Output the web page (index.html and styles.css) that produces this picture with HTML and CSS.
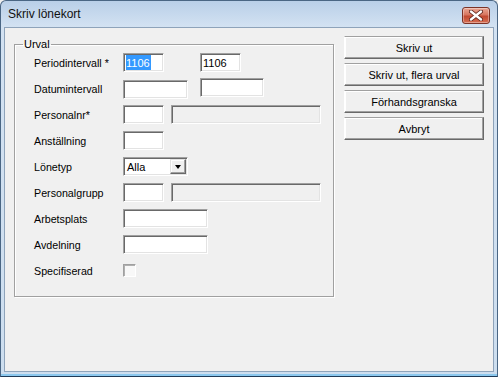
FILE: index.html
```html
<!DOCTYPE html>
<html lang="sv">

<head>
    <meta charset="UTF-8">
    <meta name="viewport" content="width=device-width, initial-scale=1.0">
    <title>Skriv lönekort</title>
    <link rel="stylesheet" href="styles.css">
</head>

<body>
    <div class="window">
        <div class="titlebar">
            <span class="title">Skriv lönekort</span>
            <button class="close" aria-label="Stäng">
                <svg width="14" height="11" viewBox="0 0 14 11">
                    <path d="M2 1.5 L12 9.5 M12 1.5 L2 9.5" stroke="#5a2018" stroke-width="4" stroke-linecap="round"/>
                    <path d="M2 1.5 L12 9.5 M12 1.5 L2 9.5" stroke="#fff" stroke-width="2.4" stroke-linecap="round"/>
                </svg>
            </button>
        </div>

        <div class="client">
            <fieldset class="urval">
                <legend>Urval</legend>
                <div class="fields">
                    <div class="row">
                        <label>Periodintervall *</label>
                        <input type="text" class="w41 selected" value="1106">
                        <input type="text" class="w41 far" value="1106">
                    </div>
                    <div class="row">
                        <label>Datumintervall</label>
                        <input type="text" class="w65 lower">
                        <input type="text" class="w64 near">
                    </div>
                    <div class="row">
                        <label>Personalnr*</label>
                        <input type="text" class="w41">
                        <input type="text" class="w150 close-gap" disabled>
                    </div>
                    <div class="row">
                        <label>Anställning</label>
                        <input type="text" class="w41">
                    </div>
                    <div class="row">
                        <label>Lönetyp</label>
                        <div class="select w65">
                            <span class="select-value">Alla</span>
                            <span class="select-arrow"></span>
                        </div>
                    </div>
                    <div class="row">
                        <label>Personalgrupp</label>
                        <input type="text" class="w41">
                        <input type="text" class="w150 close-gap" disabled>
                    </div>
                    <div class="row">
                        <label>Arbetsplats</label>
                        <input type="text" class="w85">
                    </div>
                    <div class="row">
                        <label>Avdelning</label>
                        <input type="text" class="w85">
                    </div>
                    <div class="row">
                        <label>Specifiserad</label>
                        <span class="checkbox"></span>
                    </div>
                </div>
            </fieldset>

            <div class="knappar">
                <button class="knapp">Skriv ut</button>
                <button class="knapp">Skriv ut, flera urval</button>
                <button class="knapp">Förhandsgranska</button>
                <button class="knapp">Avbryt</button>
            </div>
        </div>
    </div>
</body>

</html>
```

FILE: styles.css
```css
body {
    margin: 0;
    padding: 0;
    font-family: "Liberation Sans", Arial, sans-serif;
    font-size: 11px;
    color: #000;
    background-color: #f0f0f0;
}

.window {
    width: 498px;
    height: 377px;
    box-sizing: border-box;
    display: flex;
    flex-direction: column;
    padding: 0 3px 4px 3px;
    border: 1px solid #4a6684;
    border-bottom-color: #1f3b58;
    border-radius: 6px 6px 0 0;
    background: linear-gradient(#b9cfe8, #d3e2f2 26px, #cddeef);
    box-shadow: inset 0 -2px 0 #8cc8ee;
}

.titlebar {
    height: 26px;
    display: flex;
    align-items: center;
    justify-content: space-between;
    padding-left: 4px;
}

.title {
    font-size: 12px;
    color: #111;
}

.close {
    width: 28px;
    height: 17px;
    margin-right: 4px;
    margin-top: 2px;
    padding: 0;
    display: flex;
    align-items: center;
    justify-content: center;
    border: 1px solid #7b3327;
    border-radius: 3px;
    background: linear-gradient(#e9a795, #d8765f 45%, #c24a32 55%, #d66e52);
    box-shadow: inset 0 0 0 1px rgba(255, 255, 255, 0.35);
}

.client {
    flex: 1;
    display: flex;
    align-items: flex-start;
    padding: 8px 0 0 9px;
    background-color: #f0f0f0;
    border: 1px solid #8ea3ba;
}

.urval {
    width: 320px;
    height: 259px;
    box-sizing: border-box;
    margin: 2px 0 0 0;
    padding: 0;
    border: 1px solid #a0a0a0;
    box-shadow: 1px 1px 0 #fff, inset 1px 1px 0 #fff;
}

.urval legend {
    margin-left: 8px;
    padding: 0 1px;
    line-height: 13px;
}

.fields {
    display: flex;
    flex-direction: column;
    gap: 7px;
    padding: 2px 0 0 19px;
}

.row {
    height: 19px;
    display: flex;
    align-items: center;
}

.row label {
    width: 89px;
    flex-shrink: 0;
    font-size: 10.7px;
}

.row input {
    height: 19px;
    box-sizing: border-box;
    margin: 0;
    padding: 0 1px 0 2px;
    font-family: "Liberation Sans", Arial, sans-serif;
    font-size: 11px;
    color: #000;
    background-color: #fff;
    border-style: solid;
    border-width: 1px;
    border-color: #a0a0a0 #fff #fff #a0a0a0;
    box-shadow: inset 1px 1px 0 #696969, inset -1px -1px 0 #e3e3e3;
    outline: none;
}

.row input:disabled {
    background-color: #f0f0f0;
}

.row .selected {
    background-image: linear-gradient(#3399ff, #3399ff);
    background-repeat: no-repeat;
    background-position: 2px 1px;
    background-size: 25px 15px;
    color: #fff;
}

.w41 { width: 41px; }
.w64 { width: 64px; }
.w65 { width: 65px; }
.w85 { width: 85px; }
.w150 { width: 150px; }

.row .far { margin-left: 36px; }
.row .near { margin-left: 12px; margin-bottom: 2px; }
.row .close-gap { margin-left: 7px; }
.row .lower { margin-top: 2px; }

.select {
    height: 19px;
    box-sizing: border-box;
    display: flex;
    align-items: center;
    justify-content: space-between;
    padding: 0 1px 0 3px;
    background-color: #fff;
    border-style: solid;
    border-width: 1px;
    border-color: #a0a0a0 #fff #fff #a0a0a0;
    box-shadow: inset 1px 1px 0 #696969, inset -1px -1px 0 #e3e3e3;
}

.select-arrow {
    width: 16px;
    height: 15px;
    box-sizing: border-box;
    display: flex;
    align-items: center;
    justify-content: center;
    background-color: #f0f0f0;
    border-style: solid;
    border-width: 1px;
    border-color: #e3e3e3 #696969 #696969 #e3e3e3;
    box-shadow: inset -1px -1px 0 #a0a0a0, inset 1px 1px 0 #fff;
}

.select-arrow::after {
    content: "";
    border-left: 3.5px solid transparent;
    border-right: 3.5px solid transparent;
    border-top: 4px solid #000;
}

.checkbox {
    width: 13px;
    height: 13px;
    box-sizing: border-box;
    background-color: #f8f8f8;
    border-style: solid;
    border-width: 1px;
    border-color: #a0a0a0 #fff #fff #a0a0a0;
    box-shadow: inset 1px 1px 0 #b0b0b0;
}

.knappar {
    display: flex;
    flex-direction: column;
    gap: 4px;
    margin-left: 10px;
}

.knapp {
    width: 140px;
    height: 23px;
    padding: 0;
    font-family: "Liberation Sans", Arial, sans-serif;
    font-size: 11px;
    color: #000;
    background-color: #f0f0f0;
    border-style: solid;
    border-width: 1px;
    border-color: #a0a0a0 #696969 #696969 #fff;
    box-shadow: inset -1px -1px 0 #a0a0a0, inset 1px 1px 0 #fff;
}
```
